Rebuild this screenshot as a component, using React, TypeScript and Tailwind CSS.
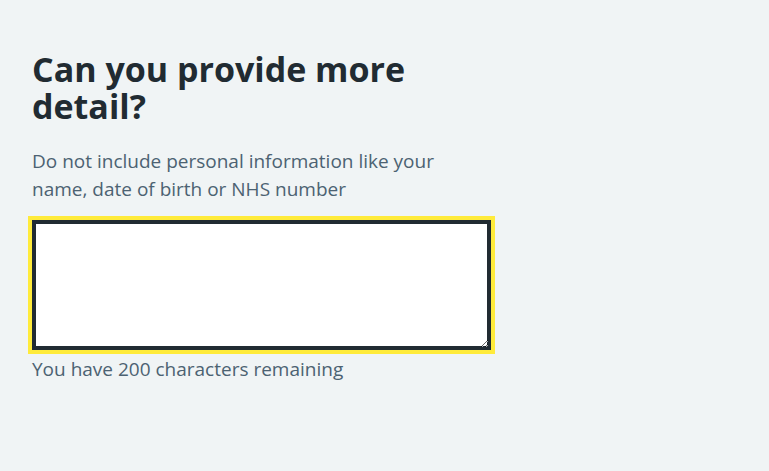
import { useState } from 'react';

const MAX = 200;

const App = () => {
  const [text, setText] = useState('');

  return (
    <div className="min-h-screen bg-[#f0f4f5] text-[#212b32] font-['Open_Sans',sans-serif] pt-[51px] pl-[32px]">
      <div className="w-[459px]">
        <h1 className="text-[34px] leading-[37px] font-bold mb-[22px]">Can you provide more detail?</h1>
        <p className="text-[19px] leading-[28px] text-[#4c6272] mb-[17px]">
          Do not include personal information like your name, date of birth or NHS number
        </p>
        <textarea
          aria-label="Can you provide more detail?"
          value={text}
          onChange={(e) => setText(e.target.value)}
          className="block w-[459px] h-[130px] bg-white border-2 border-[#212b32] shadow-[inset_0_0_0_2px_#212b32] outline-4 outline-solid outline-[#ffeb3b] p-1 text-[19px] leading-[28px]"
        />
        <div className="mt-[5px] text-[19px] leading-[28px] text-[#4c6272]">
          You have {MAX - text.length} characters remaining
        </div>
      </div>
    </div>
  );
};

export default App;
